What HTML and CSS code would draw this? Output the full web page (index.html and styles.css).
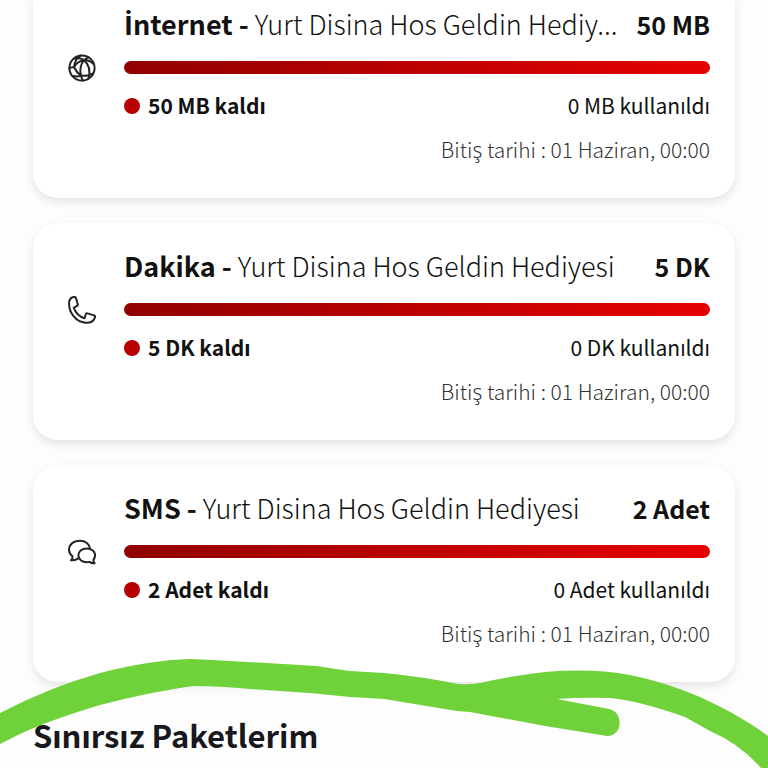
FILE: index.html
```html
<!DOCTYPE html>
<html lang="tr">
<head>
<meta charset="utf-8">
<meta name="viewport" content="width=device-width, initial-scale=1">
<title>Paketlerim</title>
<link rel="stylesheet" href="styles.css">
</head>
<body>
<main class="page">
  <section class="packages">
    <article class="card">
      <svg class="icon" viewBox="0 0 28 28" aria-hidden="true">
        <circle cx="14" cy="14" r="12.6"/>
        <path d="M6 4.500C10 3.500 13 4.200 16 6C19.500 6 23 7.500 25.500 10M16 6C17.500 5 19 4 20.500 3M12.500 1.500C9 4 6.500 8 6 13C8 9.500 11.500 7 16 6M1.500 14.500C3 13.500 4.500 13 6 13C7.500 16.500 10 19.500 13 21.500C18 22.300 22 21.500 24.800 19.500M16 6C12.500 10.500 11.500 16 13 21.500M16 6C21 10.500 22.500 17.500 20.500 24.500M13 21.500C11 22.500 8 22.700 5 22M13 21.500C13.200 23.500 14 25 15 26.500"/>
      </svg>
      <div class="body">
        <header class="row">
          <h2 class="title"><b><span class="dotted">İ</span>nternet -</b> Yurt Disina Hos Geldin Hediy...</h2>
          <strong class="total">50 MB</strong>
        </header>
        <div class="bar"></div>
        <div class="row usage">
          <span class="left">50 MB kaldı</span>
          <span>0 MB kullanıldı</span>
        </div>
        <p class="expiry">Bitiş tarihi : 01 Haziran, 00:00</p>
      </div>
    </article>
    <article class="card">
      <svg class="icon" viewBox="0 0 28 28" aria-hidden="true">
        <path d="M1.200 5.500C2 2.500 4.500.800 6.800 1C7.500 1.100 7.800 1.500 8 2.200L9.800 8.500C9.900 9.200 9.500 9.600 9 9.900L5.800 11.800C7.500 16.500 11.500 20.500 16.500 22.300L17.800 18.300C18 17.500 18.600 17.200 19.300 17.400L26.200 19.400C27 19.700 27.300 20.300 27 21.200C26 25 22.500 27 17.500 26.700C8.500 26 0 17 1.200 5.500Z"/>
      </svg>
      <div class="body">
        <header class="row">
          <h2 class="title"><b>Dakika -</b> Yurt Disina Hos Geldin Hediyesi</h2>
          <strong class="total">5 DK</strong>
        </header>
        <div class="bar"></div>
        <div class="row usage">
          <span class="left">5 DK kaldı</span>
          <span>0 DK kullanıldı</span>
        </div>
        <p class="expiry">Bitiş tarihi : 01 Haziran, 00:00</p>
      </div>
    </article>
    <article class="card">
      <svg class="icon" viewBox="0 0 28 28" aria-hidden="true">
        <path d="M22 10.500C21.500 6 17.500 2.700 12 2.700C5.500 2.700 1 6.700 1 11.800C1 14.500 2.300 16.700 4.500 18.300C4.800 20.200 4.200 21.300 3 22.300C5.800 22.500 8 21.800 9.800 20.600L11.500 20.500"/>
        <path d="M18.800 10.500C13.700 10.500 10.400 13.500 10.400 17.300C10.400 21.300 14 24.200 18.800 24.200C19.800 24.200 20.700 24.100 21.500 23.900C23 25 24.800 25.400 26.600 25.200C25.700 24.200 25.300 23 25.400 21.700C26.500 20.500 27.100 19 27.100 17.300C27.100 13.500 23.700 10.500 18.800 10.500Z"/>
      </svg>
      <div class="body">
        <header class="row">
          <h2 class="title"><b>SMS -</b> Yurt Disina Hos Geldin Hediyesi</h2>
          <strong class="total">2 Adet</strong>
        </header>
        <div class="bar"></div>
        <div class="row usage">
          <span class="left">2 Adet kaldı</span>
          <span>0 Adet kullanıldı</span>
        </div>
        <p class="expiry">Bitiş tarihi : 01 Haziran, 00:00</p>
      </div>
    </article>
  </section>
  <svg class="marker" viewBox="0 0 768 112" preserveAspectRatio="none" aria-hidden="true">
    <path d="M0 57Q50 31 100 17Q150 4 190 3L213 4L267 7L317 10Q335 13 350 15L384 17Q425 21 458 28Q468 29 480 27Q510 20 545 16Q592 12 630 19Q665 26 700 41Q740 59 768 80V112H761Q740 88 710 75L685 61Q640 45 610 42Q580 41 557 43L609 53C624 56 623 80 607 80L545 70L470 56L457 55L384 43L350 41L310 37L250 33Q220 30 193 30Q150 36 100 49Q50 64 20 78L0 88Z"/>
  </svg>
  <h1 class="heading">Sınırsız Paketlerim</h1>
</main>
</body>
</html>
```
FILE: styles.css
```css
* {
  box-sizing: border-box;
}

html {
  overflow: hidden;
}

body {
  margin: 0;
  background: #fdfdfd;
  color: #111;
  font-family: "Noto Sans CJK KR", "Noto Sans", sans-serif;
}

/* The list is scrolled slightly past the top of the first card. */
.page {
  position: relative;
  margin-top: -19px;
  padding-bottom: 11px;
}

.packages {
  display: grid;
  gap: 25px;
  padding: 0 33px;
}

.card {
  display: flex;
  align-items: center;
  gap: 28px;
  padding: 23px 25px 23px 35px;
  border-radius: 25px;
  background: #fff;
  box-shadow: 0 4px 10px rgba(0, 0, 0, 0.1);
}

.icon {
  flex: none;
  width: 28px;
  height: 28px;
  margin-bottom: 44px;
  fill: none;
  stroke: #222;
  stroke-width: 2;
  stroke-linejoin: round;
  stroke-linecap: round;
}

.body {
  flex: 1;
  min-width: 0;
}

.row {
  display: flex;
  align-items: center;
  justify-content: space-between;
  gap: 8px;
}

.title {
  min-width: 0;
  margin: 0;
  overflow: hidden;
  font-size: 27px;
  font-weight: 300;
  line-height: 40px;
  text-overflow: ellipsis;
  white-space: nowrap;
}

.title b {
  font-weight: 700;
}

/* The CJK family has no dotted capital I. */
.dotted {
  font-family: "Open Sans", sans-serif;
  line-height: 1;
}

.total {
  flex: none;
  font-size: 25px;
  font-weight: 700;
}

.bar {
  height: 13px;
  margin: 17px 0 15px;
  border-radius: 7px;
  background: linear-gradient(90deg, #900000, #bd0000 50%, #e60000);
}

.usage {
  font-size: 21px;
  line-height: 32px;
}

.left {
  display: flex;
  align-items: center;
  gap: 8px;
  font-weight: 700;
}

.left::before {
  width: 16px;
  height: 16px;
  margin-top: 2px;
  border-radius: 50%;
  background: #b90000;
  content: "";
}

.expiry {
  margin: 12px 0 10px;
  color: #333;
  font-size: 21px;
  font-weight: 300;
  line-height: 32px;
  text-align: right;
}

.heading {
  position: relative;
  margin: 31px 33px 0;
  color: #17171c;
  font-size: 31px;
  font-weight: 700;
  line-height: 44px;
}

.marker {
  position: absolute;
  bottom: 0;
  left: 0;
  width: 100%;
  height: 112px;
  fill: #70d23b;
}
```
